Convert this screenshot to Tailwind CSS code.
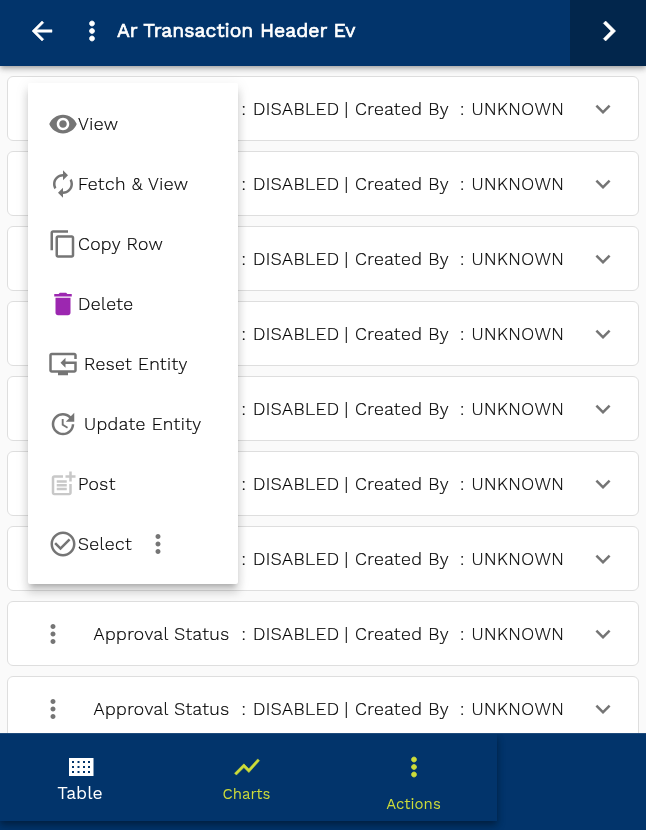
<!DOCTYPE html>
<html lang="en">
<head>
<meta charset="utf-8">
<title>Ar Transaction Header Ev</title>
<script src="https://cdn.jsdelivr.net/npm/@tailwindcss/browser@4"></script>
</head>
<body class="h-[830px] w-[646px] overflow-hidden bg-[#fafafa] font-['Work_Sans',Inter,sans-serif] text-[17.6px] leading-[24px] font-light tracking-[0.44px] text-black antialiased">
<svg class="hidden">
  <symbol id="dots" viewBox="0 0 24 24"><path d="M12 8c1.1 0 2-.9 2-2s-.9-2-2-2-2 .9-2 2 .9 2 2 2zm0 2c-1.1 0-2 .9-2 2s.9 2 2 2 2-.9 2-2-.9-2-2-2zm0 6c-1.1 0-2 .9-2 2s.9 2 2 2 2-.9 2-2-.9-2-2-2z"/></symbol>
  <symbol id="down" viewBox="0 0 24 24"><path d="M16.59 8.59 12 13.17 7.41 8.59 6 10l6 6 6-6z"/></symbol>
</svg>
<div class="relative flex h-[830px] flex-col will-change-transform">
  <header class="relative z-10 flex h-[66px] shrink-0 items-center bg-[#02346b] pb-[4px] text-white shadow-[0_2px_4px_-1px_rgba(0,0,0,0.2),0_4px_5px_rgba(0,0,0,0.14),0_1px_10px_rgba(0,0,0,0.12)]">
    <svg class="ml-[27px] size-[30px] fill-white stroke-white stroke-[0.4px]" viewBox="0 0 24 24"><path d="M20 11H7.83l5.59-5.59L12 4l-8 8 8 8 1.41-1.41L7.83 13H20v-2z"/></svg>
    <svg class="ml-[20px] size-[30px] fill-white stroke-white stroke-[0.6px]"><use href="#dots"/></svg>
    <h1 class="ml-[10px] whitespace-nowrap text-[19.4px] font-normal tracking-normal [-webkit-text-stroke:0.7px_white]">Ar Transaction Header Ev</h1>
    <div class="-mb-[4px] ml-auto flex h-[66px] w-[76px] items-center justify-center bg-[#02264c] pb-[4px] pl-[2px]">
      <svg class="size-[40px] fill-white stroke-white stroke-[0.3px]" viewBox="0 0 24 24"><path d="M10 6 8.59 7.41 13.17 12l-4.58 4.59L10 18l6-6z"/></svg>
    </div>
  </header>
  <main id="rows" class="flex h-[667px] flex-col gap-[10px] overflow-hidden px-[7px] pt-[10px] [-webkit-text-stroke:0.22px_black]"></main>
  <footer class="relative z-10 h-[97px] shrink-0 overflow-hidden border-t border-[#1f4b7c] bg-[#02346b] font-normal tracking-normal">
    <nav class="flex h-[87px] w-[497px] bg-[#02346b] text-center text-[#cddc39] shadow-[0_3px_6px_rgba(0,0,0,0.25),0_5px_9px_rgba(0,0,0,0.2)]">
      <a class="flex w-[160px] flex-col items-center text-[17.6px] text-white">
        <svg class="mt-[24px] ml-[3px] h-[18px] w-[25px]" viewBox="0 0 25 18"><path fill="#fff" fill-rule="evenodd" d="M0 0h24.5v18H0zM3 3v2h2V3zm5.5 0v2h2V3zm5.500 0v2h2V3zm5 0v2h2V3zM3 8v2h2V8zm5.500 0v2h2V8zm5.500 0v2h2V8zm5 0v2h2V8zM3 13v2h2v-2zm5.500 0v2h2v-2zm5.500 0v2h2v-2zm5 0v2h2v-2z"/></svg>
        <span class="mt-[5px]">Table</span>
      </a>
      <a class="flex w-[173px] flex-col items-center text-[15px]">
        <svg class="mt-[18px] size-[30px] fill-[#cddc39] stroke-[#cddc39] stroke-[0.4px]" viewBox="0 0 24 24"><path d="m3.5 18.49 6-6.01 4 4L22 6.92l-1.41-1.41-7.09 7.97-4-4L2 16.99z"/></svg>
        <span>Charts</span>
      </a>
      <a class="flex w-[161px] flex-col items-center text-[15px]">
        <svg class="mt-[18px] size-[30px] fill-[#cddc39] stroke-[#cddc39] stroke-[0.6px]"><use href="#dots"/></svg>
        <span class="mt-[10px]">Actions</span>
      </a>
    </nav>
  </footer>
  <ul class="absolute top-[83px] left-[28px] z-20 flex h-[501px] w-[210px] flex-col rounded-[2px] bg-white pt-[11px] pl-[20px] [-webkit-text-stroke:0.22px_black] shadow-[0_5px_5px_-3px_rgba(0,0,0,0.2),0_8px_10px_1px_rgba(0,0,0,0.14),0_3px_14px_2px_rgba(0,0,0,0.06)]">
    <li class="flex h-[60px] items-center"><svg class="size-[30px] fill-[#757575]" viewBox="0 0 24 24"><path d="M12 4.5C7 4.5 2.73 7.61 1 12c1.73 4.39 6 7.5 11 7.5s9.27-3.11 11-7.500c-1.730-4.390-6-7.500-11-7.500zM12 17c-2.760 0-5-2.240-5-5s2.240-5 5-5 5 2.240 5 5-2.240 5-5 5zm0-8c-1.660 0-3 1.340-3 3s1.340 3 3 3 3-1.340 3-3-1.340-3-3-3z"/></svg><span>View</span></li>
    <li class="flex h-[60px] items-center"><svg class="size-[30px] fill-[#757575]" viewBox="0 0 24 24"><path d="M12 6v3l4-4-4-4v3c-4.420 0-8 3.580-8 8 0 1.570.46 3.030 1.240 4.260L6.700 14.800A5.870 5.870 0 0 1 6 12c0-3.310 2.690-6 6-6zm6.760 1.740L17.300 9.200c.44.840.7 1.790.7 2.800 0 3.310-2.690 6-6 6v-3l-4 4 4 4v-3c4.420 0 8-3.580 8-8 0-1.570-.46-3.030-1.240-4.260z"/></svg><span>Fetch &amp; View</span></li>
    <li class="flex h-[60px] items-center"><svg class="size-[30px] fill-[#757575]" viewBox="0 0 24 24"><path d="M16 1H4c-1.100 0-2 .9-2 2v14h2V3h12V1zm3 4H8c-1.100 0-2 .9-2 2v14c0 1.100.9 2 2 2h11c1.100 0 2-.9 2-2V7c0-1.100-.9-2-2-2zm0 16H8V7h11v14z"/></svg><span>Copy Row</span></li>
    <li class="flex h-[60px] items-center"><svg class="size-[30px] fill-[#9c27b0]" viewBox="0 0 24 24"><path d="M6 19c0 1.100.9 2 2 2h8c1.100 0 2-.9 2-2V7H6v12zM19 4h-3.500l-1-1h-5l-1 1H5v2h14V4z"/></svg><span>Delete</span></li>
    <li class="flex h-[60px] items-center"><svg class="size-[30px] fill-[#757575]" viewBox="0 0 24 24"><path d="M21 3H3c-1.100 0-2 .9-2 2v12c0 1.100.9 2 2 2h5v2h8v-2h5c1.100 0 2-.9 2-2v-7h-9V7l-4 4 4 4v-3h7v5H3V5h18v3h2V5c0-1.100-.9-2-2-2z"/></svg><span class="ml-[6px]">Reset Entity</span></li>
    <li class="flex h-[60px] items-center"><svg class="size-[30px] fill-[#757575]" viewBox="0 0 24 24"><path d="M21 10.120h-6.780l2.740-2.820c-2.730-2.700-7.150-2.800-9.880-.1-2.730 2.710-2.730 7.080 0 9.790s7.150 2.710 9.880 0C18.320 15.650 19 14.080 19 12.100h2c0 1.980-.88 4.550-2.640 6.290-3.510 3.480-9.210 3.480-12.720 0-3.500-3.470-3.530-9.110-.02-12.580s9.140-3.470 12.650 0L21 3v7.120zM12.500 8v4.250l3.500 2.080-.72 1.210L11 13V8h1.500z"/></svg><span class="ml-[6px]">Update Entity</span></li>
    <li class="flex h-[60px] items-center"><svg class="size-[30px] fill-[#c8c8c8]" viewBox="0 0 24 24"><path d="M17 19.220H5V7h7V5H5c-1.100 0-2 .9-2 2v12c0 1.100.9 2 2 2h12c1.100 0 2-.9 2-2v-7h-2v7.220zM19 2h-2v3h-3v2h3v2.990h2V7h3V5h-3V2zM7 9h8v2H7zm0 3v2h8v-2zm0 3h8v2H7z"/></svg><span>Post</span></li>
    <li class="flex h-[60px] items-center"><svg class="size-[30px] fill-[#757575]" viewBox="0 0 24 24"><path d="M16.590 7.580 10 14.170l-3.590-3.580L5 12l5 5 8-8zM12 2C6.480 2 2 6.480 2 12s4.480 10 10 10 10-4.480 10-10S17.520 2 12 2zm0 18c-4.420 0-8-3.580-8-8s3.580-8 8-8 8 3.580 8 8-3.580 8-8 8z"/></svg><span class="w-[65px]">Select</span><svg class="size-[30px] fill-[#757575]"><use href="#dots"/></svg></li>
  </ul>
</div>
<script>
  const row = `
    <article class="flex h-[65px] w-[632px] shrink-0 items-center whitespace-pre rounded-[6px] border border-[#dedede] bg-white">
      <svg class="ml-[30px] size-[30px] fill-[#757575]"><use href="#dots"/></svg>
      <span class="ml-[25.5px] w-[148px]">Approval Status</span><span class="w-[11.5px]">:</span>
      <span class="w-[91.5px]">DISABLED</span><span class="w-[10.5px]">|</span>
      <span class="w-[105px]">Created By</span><span class="w-[11.5px]">:</span><span class="w-[93px]">UNKNOWN</span>
      <svg class="ml-[23.5px] size-[30px] fill-[#757575]"><use href="#down"/></svg>
    </article>`;
  document.getElementById('rows').innerHTML = row.repeat(9);
</script>
</body>
</html>
